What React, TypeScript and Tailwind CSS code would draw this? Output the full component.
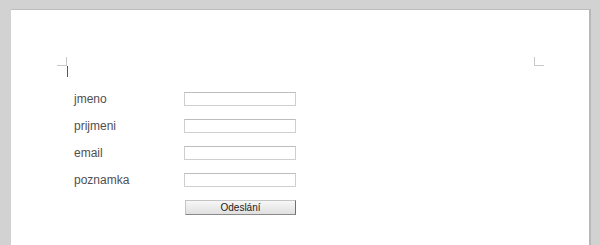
import React from 'react';

const fields = ['jmeno', 'prijmeni', 'email', 'poznamka'];

const App: React.FC = () => {
    return (
        <div className="h-[245px] w-[600px] overflow-hidden bg-[#d2d2d2] pt-[9px] pl-[11px] pr-[9px]" style={{ fontFamily: '"Liberation Sans", Arial, sans-serif' }}>
            <div className="h-full bg-white border-t border-[#bdbdbd] border-r-2 border-r-[#b8b8b8] flex flex-col">
                {/* margin marks */}
                <div className="mt-[47px] flex justify-between pl-[46px] pr-[45px]">
                    <div className="flex flex-col">
                        <div className="w-[10px] h-[9px] border-r border-b border-[#c8c8c8]" />
                        <div className="ml-[10px] w-px h-[11px] bg-[#555]" />
                    </div>
                    <div className="w-[10px] h-[9px] border-l border-b border-[#c8c8c8]" />
                </div>

                <form className="mt-[15px] pl-[63px] grid grid-cols-[110px_112px] gap-y-[13px] items-center" onSubmit={e => e.preventDefault()}>
                    {fields.map(f => (
                        <React.Fragment key={f}>
                            <label className="text-[12px] leading-[14px] text-[#505050]">{f}</label>
                            <input type="text" className="h-[14px] w-[112px] border border-[#cfcfcf] border-t-[#bdbdbd] bg-white outline-none" />
                        </React.Fragment>
                    ))}
                    <div />
                    <button type="submit"
                        className="h-[15px] w-[111px] ml-px border border-[#c4c4c4] border-r-[#6f6f6f] border-b-[#8a8a8a] bg-gradient-to-b from-[#f7f7f7] to-[#e0e0e0] text-[10px] leading-[12px] text-[#222]">
                        Odeslání
                    </button>
                </form>
            </div>
        </div>
    );
};

export default App;
